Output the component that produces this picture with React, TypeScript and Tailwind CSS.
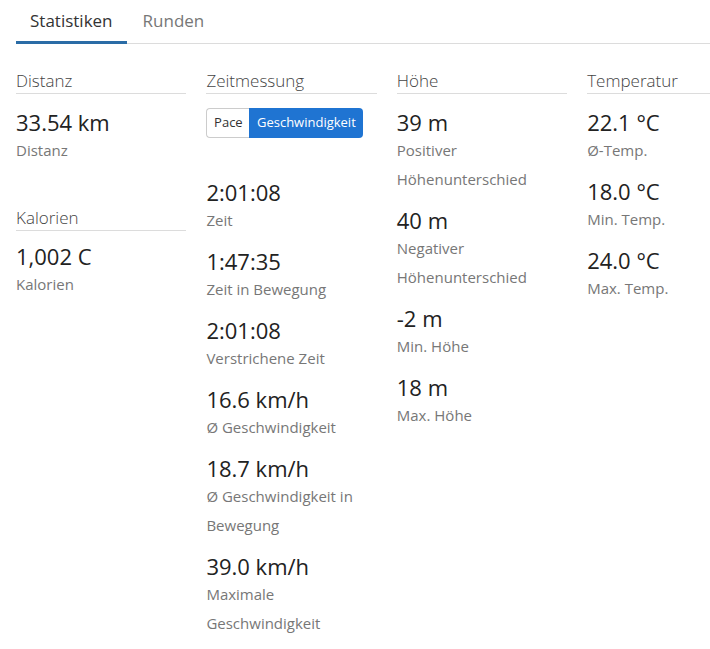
import React from "react";

type Stat = { value: string; label: string };

function Header({ title, mb = "mb-[14px]" }: { title: string; mb?: string }) {
  return (
    <div className={`mr-[20px] ${mb} border-b border-[#dcdcdc] text-[17px] leading-[24px] text-[#444] font-light`}>
      {title}
    </div>
  );
}

function StatBlock({ s }: { s: Stat }) {
  return (
    <div className="mb-[12px] pr-[20px]">
      <div className="text-[22px] leading-[28px] text-[#222]">{s.value}</div>
      <div className="text-[15px] leading-[29px] text-[#777]">{s.label}</div>
    </div>
  );
}

export default function App() {
  const zeit: Stat[] = [
    { value: "2:01:08", label: "Zeit" },
    { value: "1:47:35", label: "Zeit in Bewegung" },
    { value: "2:01:08", label: "Verstrichene Zeit" },
    { value: "16.6 km/h", label: "Ø Geschwindigkeit" },
    { value: "18.7 km/h", label: "Ø Geschwindigkeit in Bewegung" },
    { value: "39.0 km/h", label: "Maximale Geschwindigkeit" },
  ];
  const hoehe: Stat[] = [
    { value: "39 m", label: "Positiver Höhenunterschied" },
    { value: "40 m", label: "Negativer Höhenunterschied" },
    { value: "-2 m", label: "Min. Höhe" },
    { value: "18 m", label: "Max. Höhe" },
  ];
  const temp: Stat[] = [
    { value: "22.1 °C", label: "Ø-Temp." },
    { value: "18.0 °C", label: "Min. Temp." },
    { value: "24.0 °C", label: "Max. Temp." },
  ];
  return (
    <div
      className="w-[710px] h-[649px] overflow-hidden bg-white"
      style={{ fontFamily: '"Open Sans", "Noto Sans", sans-serif' }}
    >
      <div className="pl-[16px]">
        <div className="flex h-[44px] border-b border-[#dcdcdc]">
          <div className="h-[44px] -mb-px px-[14px] pt-[9px] border-b-[3px] border-[#2a6ca6] text-[17px] leading-[24px] text-[#333]">
            Statistiken
          </div>
          <div className="ml-[2px] h-[44px] px-[14px] pt-[9px] text-[17px] leading-[24px] text-[#777]">
            Runden
          </div>
        </div>
        <div className="flex pt-[25px] w-[800px]">
          <div className="w-[190.4px] shrink-0">
            <Header title="Distanz" />
            <StatBlock s={{ value: "33.54 km", label: "Distanz" }} />
            <div className="mt-[41px]">
              <Header title="Kalorien" mb="mb-[11px]" />
              <StatBlock s={{ value: "1,002 C", label: "Kalorien" }} />
            </div>
          </div>
          <div className="w-[190.4px] shrink-0">
            <Header title="Zeitmessung" />
            <div className="mb-[40px] flex h-[30px] w-[157px] text-[13px]">
              <div className="flex w-[43px] items-center justify-center rounded-l-[4px] border border-r-0 border-[#ccc] text-[#333] bg-white">
                Pace
              </div>
              <div className="flex flex-1 items-center justify-center rounded-r-[4px] bg-[#1f74d2] text-white">
                Geschwindigkeit
              </div>
            </div>
            {zeit.map((s, i) => (
              <StatBlock key={i} s={s} />
            ))}
          </div>
          <div className="w-[190.4px] shrink-0">
            <Header title="Höhe" />
            {hoehe.map((s, i) => (
              <StatBlock key={i} s={s} />
            ))}
          </div>
          <div className="w-[190.4px] shrink-0">
            <Header title="Temperatur" />
            {temp.map((s, i) => (
              <StatBlock key={i} s={s} />
            ))}
          </div>
        </div>
      </div>
    </div>
  );
}
